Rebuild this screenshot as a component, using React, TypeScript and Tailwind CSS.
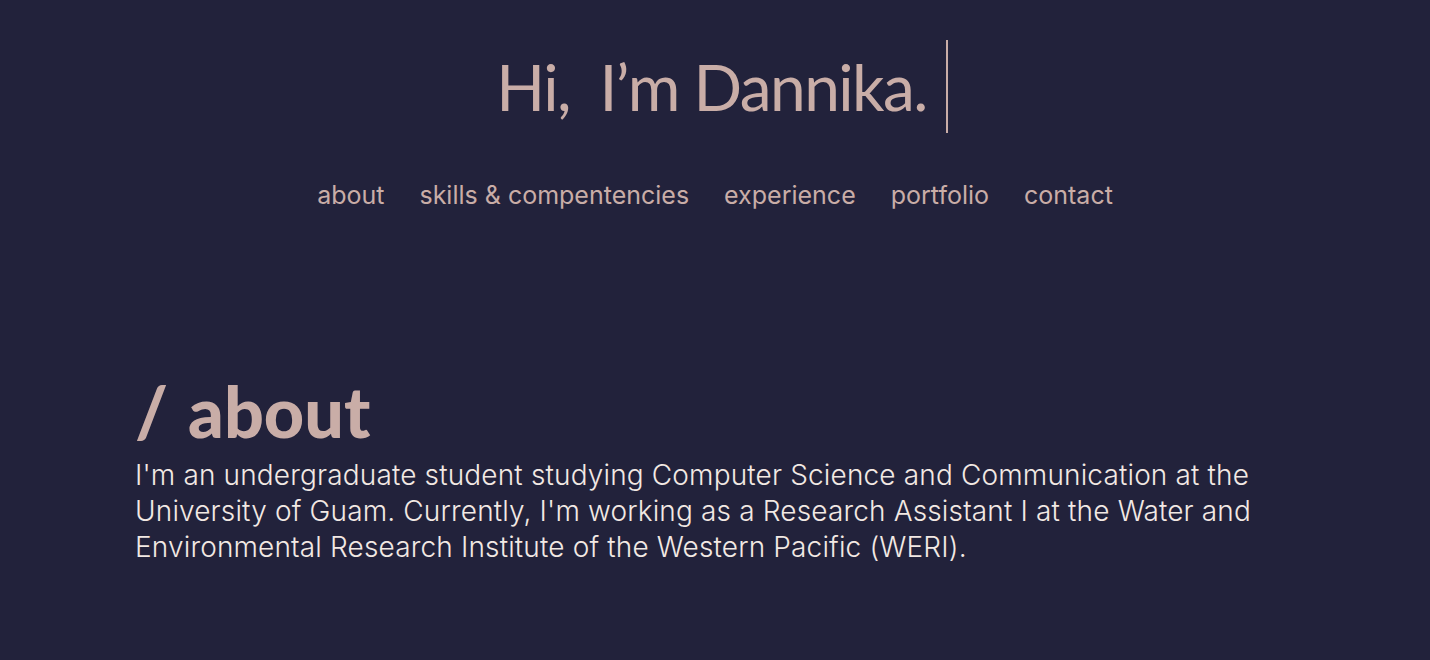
export default function App() {
  const links = ["about", "skills & compentencies", "experience", "portfolio", "contact"]
  return (
    <div className="min-h-[660px] bg-[#22223b] text-[#c9ada7]">
      <header className="flex flex-col items-center pt-[40px]">
        <div className="flex items-center gap-[19px] pl-[14px]">
          <h1
            className="text-[64px] leading-[93px] font-normal tracking-[-1.6px]"
            style={{ fontFamily: "Lato, sans-serif" }}
          >
            Hi,&nbsp; I’m Dannika.
          </h1>
          <span className="block w-[2px] h-[93px] bg-[#c9ada7]" />
        </div>
        <nav
          className="flex gap-[35px] mt-[47px] text-[25px] leading-[30px]"
          style={{ fontFamily: "Inter, sans-serif" }}
        >
          {links.map((l) => (
            <a key={l} href="#">
              {l}
            </a>
          ))}
        </nav>
      </header>

      <section className="px-[135px] pt-[165px]">
        <h2
          className="text-[70px] leading-[72px] font-black"
          style={{ fontFamily: "Lato, sans-serif" }}
        >
          <span className="mr-[20px]">/</span>about
        </h2>
        <p
          className="mt-[10px] text-[28px] leading-[36px] text-[#f2e9e4] font-light tracking-[0.15px]"
          style={{ fontFamily: "Inter, sans-serif" }}
        >
          I'm an undergraduate student studying Computer Science and Communication at the University of
          Guam. Currently, I'm working as a Research Assistant I at the Water and Environmental Research
          Institute of the Western Pacific (WERI).
        </p>
      </section>
    </div>
  )
}
